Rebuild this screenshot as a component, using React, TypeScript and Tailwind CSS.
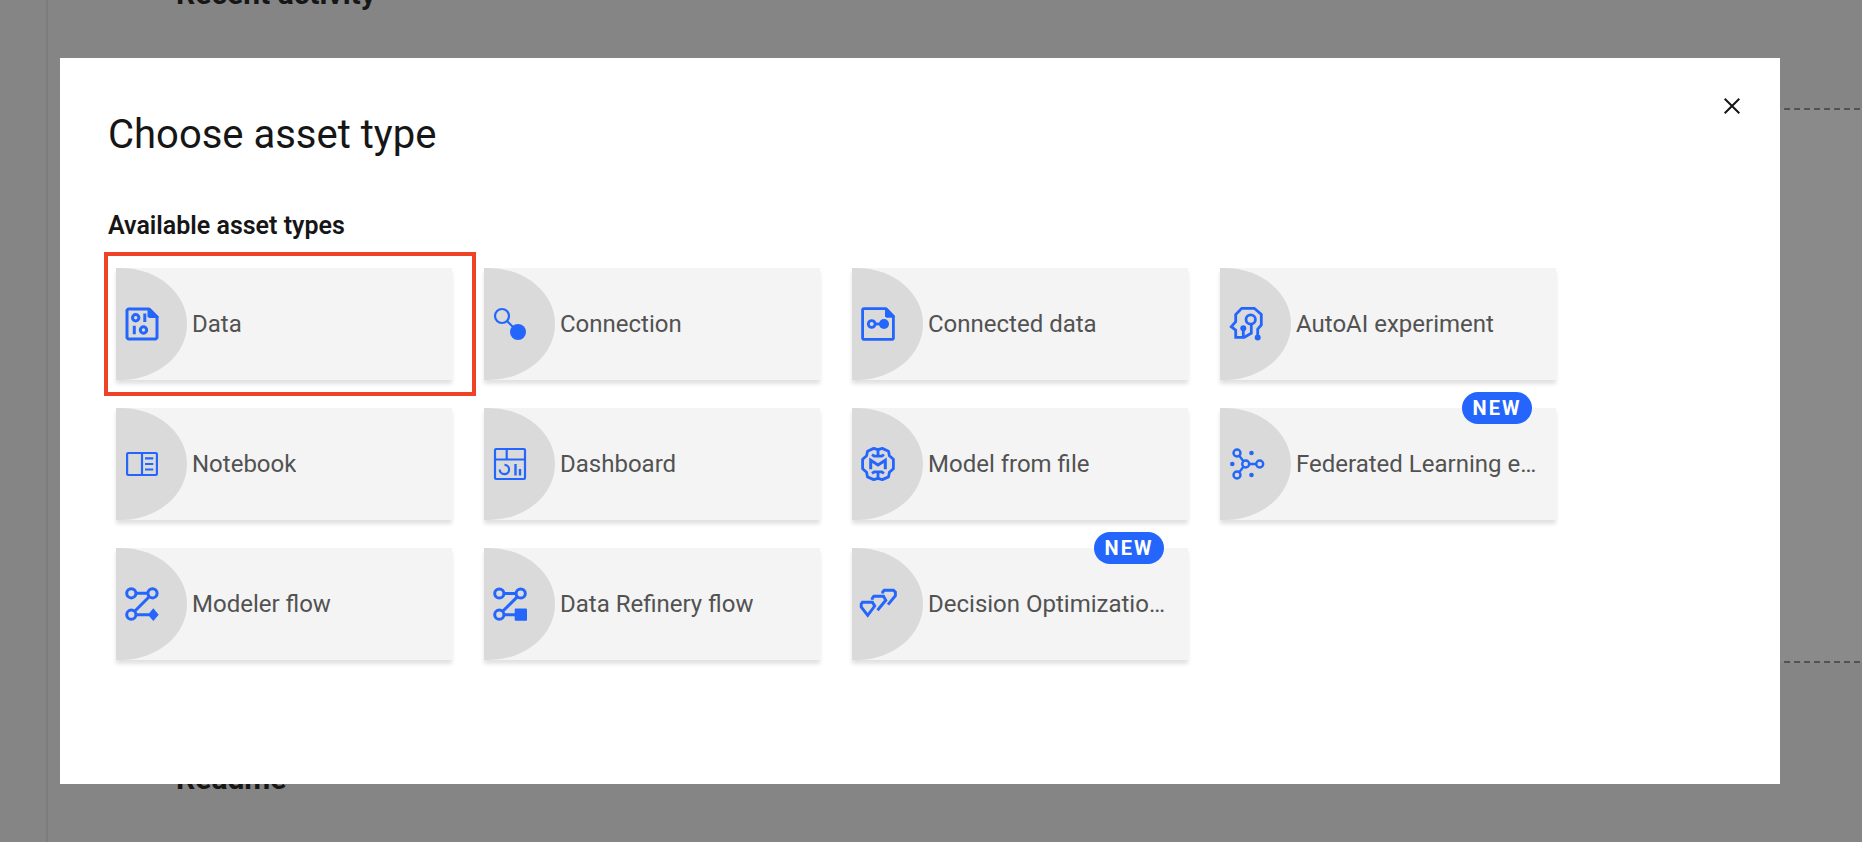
import type { ReactNode } from "react";

type Asset = { label: string; icon: ReactNode; isNew?: boolean; highlighted?: boolean };

function Icon({ width, children }: { width: number; children: ReactNode }) {
  return (
    <svg
      viewBox="0 0 40 40"
      className="size-10 shrink-0"
      fill="none"
      stroke="currentColor"
      strokeWidth={width}
      aria-hidden="true"
    >
      {children}
    </svg>
  );
}

const dataIcon = (
  <Icon width={3}>
    <path d="M5 6.2 6.2 5H27l8 8v20.8L33.8 35H6.2L5 33.8Z" strokeLinejoin="round" />
    <path d="M25.5 4H28l8.500 8.500V14h-9.500l-1.500-1.500Z" fill="currentColor" stroke="none" />
    <circle cx="13.7" cy="13.7" r="3.2" />
    <path d="M22.800 9.500v8.500M12.300 21.700v8.600" />
    <circle cx="21.5" cy="26" r="3.2" />
  </Icon>
);

const connectionIcon = (
  <Icon width={2.2}>
    <circle cx="12" cy="12" r="7" />
    <path d="m17 17 6 6" />
    <circle cx="28" cy="28" r="8" fill="currentColor" stroke="none" />
  </Icon>
);

const connectedDataIcon = (
  <Icon width={2.8}>
    <path d="M4.600 5.600 5.600 4.600H28l7.400 7.800v22L34.400 35.400H5.600L4.600 34.400Z" strokeLinejoin="round" />
    <path d="M27 4h2l7.700 7.700v2H28.500L27 12.200Z" fill="currentColor" stroke="none" />
    <circle cx="13.7" cy="20" r="3.4" />
    <path d="M17 20h7" />
    <circle cx="26" cy="20" r="5" fill="currentColor" stroke="none" />
  </Icon>
);

const autoAiIcon = (
  <Icon width={2.8}>
    <path d="M31.700 33v-7.800l3.600-4.200V10.500l-7-6.200H15.700l-6 6.200v7.200l-4.400 5 4.400 3.500v7.100h8.600l7-4V20.500" />
    <circle cx="24.7" cy="15.5" r="4.7" />
    <path d="M17.300 33v-8" />
    <circle cx="17.3" cy="24.3" r="3" fill="currentColor" stroke="none" />
    <circle cx="31.7" cy="33.5" r="3" fill="currentColor" stroke="none" />
  </Icon>
);

const notebookIcon = (
  <Icon width={2.2}>
    <rect x="5.1" y="9" width="29.8" height="22" rx="1" />
    <path d="M20 9v22M23 14.300h8.300M23 20h8.300M23 25.500h8.300" />
  </Icon>
);

const dashboardIcon = (
  <Icon width={2.2}>
    <rect x="5" y="5" width="30" height="30" rx="1" />
    <path d="M5 15.500h30M16.700 5v10.500" />
    <path d="M14.500 20.800a4.700 4.700 0 1 1-4.800 4.700" />
    <path d="M25.500 20v11.500M30 25v6.500" strokeWidth="2.4" />
  </Icon>
);

const modelIcon = (
  <Icon width={2.8}>
    <path d="M20 5.700 24.300 4.400 30.500 7.200l.9 4.500 4 3.600v9.400l-4 3.600-.9 4.600-6.200 2.700L20 34.300l-4.300 1.300-6.200-2.700-.9-4.600-4-3.600v-9.400l4-3.600.9-4.500 6.200-2.800Z" strokeLinejoin="round" />
    <path d="M20 5.700v6.500M14 10.600l2.300 1.600h7.400l2.300-1.600M20 34.300v-6.500M14 29.400l2.300-1.600h7.400l2.300 1.600" />
    <path d="M12.700 25.300v-9L20 21l7.300-4.700v9" strokeWidth="3" />
  </Icon>
);

const federatedIcon = (
  <Icon width={2.4}>
    <circle cx="19.7" cy="20" r="3.5" />
    <circle cx="33.7" cy="20" r="3.5" />
    <circle cx="11" cy="9" r="3.5" />
    <circle cx="11" cy="31" r="3.5" />
    <path d="M23 20h7.200M13.200 11.800l4.300 5.400M13.200 28.200l4.300-5.400" />
    <g fill="currentColor" stroke="none">
      <circle cx="25.5" cy="9" r="2.3" />
      <circle cx="6.3" cy="20" r="2.3" />
      <circle cx="25.5" cy="31" r="2.3" />
    </g>
  </Icon>
);

const modelerIcon = (
  <Icon width={3}>
    <circle cx="9.3" cy="9.3" r="4.6" />
    <circle cx="30.5" cy="9.3" r="4.6" />
    <circle cx="9.3" cy="30.7" r="4.6" />
    <path d="M14 9.300h11.800M27.200 12.700 12.700 27.300M14 30.700h13" />
    <path d="m31.300 24.300 5.400 6.400-5.400 6.400-5.400-6.400Z" fill="currentColor" stroke="none" />
  </Icon>
);

const refineryIcon = (
  <Icon width={3}>
    <circle cx="9.3" cy="9.5" r="4.6" />
    <circle cx="30.7" cy="9.5" r="4.6" />
    <circle cx="9.3" cy="30.7" r="4.6" />
    <path d="M14 9.500h12M27.300 12.900 12.700 27.300M14 30.700h12" />
    <rect x="24.7" y="24.5" width="12.3" height="12.3" rx="1" fill="currentColor" stroke="none" />
  </Icon>
);

const decisionIcon = (
  <Icon width={2.9}>
    <path d="M4.500 18.200h9.900l2.300 3.800-7 9.300-6.500-8.300v-3Z" />
    <path d="M14.300 15.700v-1.500l1.500-1.900h9.700l2.300 4-8.300 10" />
    <path d="M24.700 9.500V8l1.500-1.800h9.200l2 2v3.600l-7.400 8.800" />
  </Icon>
);

const assets: Asset[] = [
  { label: "Data", icon: dataIcon, highlighted: true },
  { label: "Connection", icon: connectionIcon },
  { label: "Connected data", icon: connectedDataIcon },
  { label: "AutoAI experiment", icon: autoAiIcon },
  { label: "Notebook", icon: notebookIcon },
  { label: "Dashboard", icon: dashboardIcon },
  { label: "Model from file", icon: modelIcon },
  { label: "Federated Learning experiment", icon: federatedIcon, isNew: true },
  { label: "Modeler flow", icon: modelerIcon },
  { label: "Data Refinery flow", icon: refineryIcon },
  { label: "Decision Optimization experiment", icon: decisionIcon, isNew: true },
];

function AssetCard({ label, icon, isNew, highlighted }: Asset) {
  return (
    <li className="relative">
      <button
        type="button"
        className="flex h-28 w-full items-center bg-[#f4f4f4] pr-3 text-left shadow-[0_4px_4px_rgba(0,0,0,0.12)]"
      >
        <span className="flex h-full w-[71px] shrink-0 items-center rounded-r-[66px_56px] bg-[#dadada] pl-[6px] text-[#2466fb]">
          {icon}
        </span>
        <span className="ml-[5px] min-w-0 truncate text-2xl text-[#525252]">{label}</span>
      </button>
      {isNew && (
        <span className="absolute -top-4 right-6 flex h-8 w-[70px] items-center justify-center rounded-full bg-[#2466fb] text-xl font-bold tracking-widest text-white">
          NEW
        </span>
      )}
      {highlighted && (
        <span className="pointer-events-none absolute -top-4 -right-6 -bottom-4 -left-3 border-4 border-[#ee4327]" />
      )}
    </li>
  );
}

export default function App() {
  return (
    <div className="relative h-screen overflow-hidden bg-[#858585] font-['Roboto','Noto_Sans',sans-serif] text-[#161616]">
      <div className="flex h-full" aria-hidden="true">
        <div className="w-12 shrink-0 border-r-2 border-[#7c7c7c]" />
        <div className="flex min-w-0 flex-1 flex-col pl-32">
          <h2 className="-mt-6 text-[30px] leading-9 font-bold">Recent activity</h2>
          <div className="mt-24 -mr-2 h-[555px] shrink-0 border-2 border-dashed border-[#525252] bg-[#8a8a8a]" />
          <h2 className="mt-[98px] text-[30px] leading-9 font-bold">Readme</h2>
        </div>
      </div>

      <div className="absolute inset-0 pt-[58px] pr-[82px] pb-[58px] pl-[60px]">
        <section role="dialog" aria-labelledby="dialog-title" className="flex h-full flex-col bg-white px-12 pt-12">
          <header className="flex items-start justify-between">
            <h1 id="dialog-title" className="text-[40px] leading-[58px]">
              Choose asset type
            </h1>
            <button type="button" aria-label="Close" className="-mt-6 -mr-6 flex size-12 items-center justify-center">
              <svg viewBox="0 0 16 16" className="size-4" stroke="currentColor" strokeWidth="2" aria-hidden="true">
                <path d="M.7.700l14.600 14.600M15.300.700.7 15.300" />
              </svg>
            </button>
          </header>
          <h2 className="mt-[46px] text-[25px] leading-8 font-semibold">Available asset types</h2>
          <ul className="mt-[26px] ml-2 grid grid-cols-[repeat(auto-fill,336px)] gap-x-8 gap-y-7 pr-40">
            {assets.map((asset) => (
              <AssetCard key={asset.label} {...asset} />
            ))}
          </ul>
        </section>
      </div>
    </div>
  );
}
